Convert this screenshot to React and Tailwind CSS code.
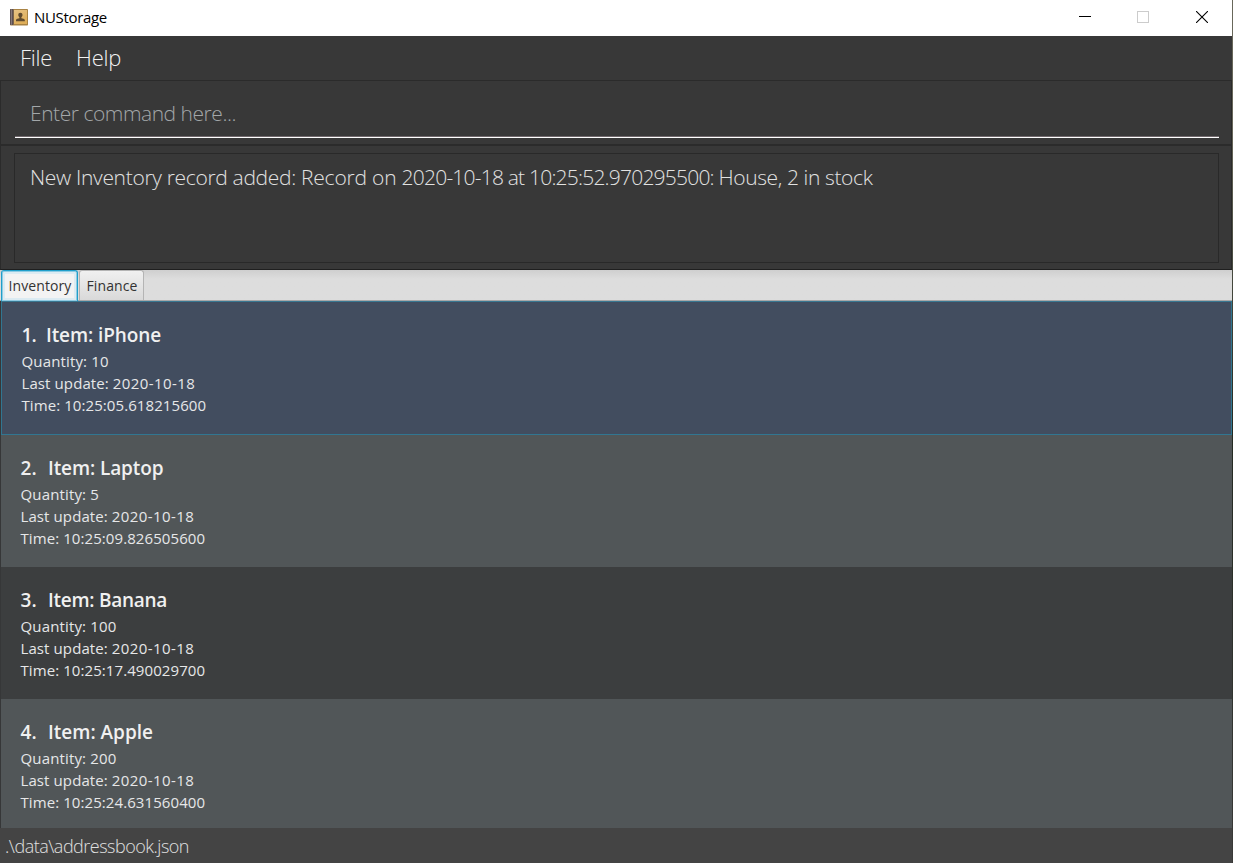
import React from "react";

const records = [
  { id: 1, name: "iPhone", quantity: 10, date: "2020-10-18", time: "10:25:05.618215600" },
  { id: 2, name: "Laptop", quantity: 5, date: "2020-10-18", time: "10:25:09.826505600" },
  { id: 3, name: "Banana", quantity: 100, date: "2020-10-18", time: "10:25:17.490029700" },
  { id: 4, name: "Apple", quantity: 200, date: "2020-10-18", time: "10:25:24.631560400" },
];

const rowStyles = {
  1: "h-[134px] border border-[#317691] border-t-[#397791] bg-[#424d5f] pl-[19.5px] pt-[19px]",
  2: "h-[132px] bg-[#515658] pl-[19.5px] pt-[19px]",
  3: "h-[132px] bg-[#3c3e3f] pl-[19.5px] pt-[19px]",
  4: "h-[129px] bg-[#515658] pl-[19.5px] pt-[19px]",
};

const nameSpacing = {
  1: "tracking-[-0.1px]",
  2: "tracking-[-0.1px]",
  3: "tracking-[-0.27px]",
  4: "tracking-normal",
};

function BookIcon() {
  return (
    <svg width="18" height="17" viewBox="0 0 18 17" className="block shrink-0">
      <defs>
        <linearGradient id="cover" x1="0" y1="0" x2="0.4" y2="1">
          <stop offset="0" stopColor="#e6c285" />
          <stop offset="1" stopColor="#dfae58" />
        </linearGradient>
      </defs>
      <rect x="0" y="0" width="18" height="16.5" rx="0.8" fill="#a98344" />
      <rect x="0" y="0" width="3.6" height="16" rx="0.8" fill="#5d5052" />
      <rect x="1" y="0.3" width="1" height="15.5" fill="#85787a" />
      <rect x="4" y="1" width="13" height="14" fill="url(#cover)" />
      <path
        d="M10.400 3.700c1.300 0 2.100.9 2.100 2.200 0 1-.5 1.800-1.100 2.300v1c1 .4 3.400.6 3.400 1.700v1.300H6v-1.300c0-1.100 2.400-1.300 3.400-1.700v-1c-.6-.5-1.100-1.300-1.100-2.300 0-1.300.8-2.200 2.100-2.200z"
        fill="#604b30"
      />
    </svg>
  );
}

function TitleBar() {
  return (
    <header className="flex h-9 items-center bg-white pl-[10px] text-black">
      <div className="pb-px">
        <BookIcon />
      </div>
      <h1 className="grow pb-0.5 pl-[6px] text-[15px] leading-[34px] tracking-[-0.32px]">NUStorage</h1>
      <div className="flex items-center pb-[3px] pr-6">
        <svg width="12" height="12" shapeRendering="crispEdges">
          <path d="M0 5h12v1H0z" fill="#000" />
        </svg>
        <svg width="12" height="12" shapeRendering="crispEdges" className="ml-[46px]">
          <path d="M.5.5h11v11H.5z" fill="none" stroke="#ccc" />
        </svg>
        <svg width="12" height="12" className="ml-[47px]">
          <path d="M0 0l12 12M12 0L0 12" stroke="#000" strokeWidth="1.1" />
        </svg>
      </div>
    </header>
  );
}

function RecordRow({ record }) {
  return (
    <li className={rowStyles[record.id]}>
      <div className="mb-px flex h-7 text-[19px] font-semibold leading-7 text-[#f0f0f0]">
        <span className={record.id === 1 ? "w-[24.500px] tracking-[-1px]" : "w-[27.5px]"}>{record.id}.</span>
        <span className={nameSpacing[record.id]}>Item: {record.name}</span>
      </div>
      <div className="text-[15px] leading-[22px] text-[#e6e7e8]">
        <p className="tracking-[0.15px]">Quantity: {record.quantity}</p>
        <p className="tracking-[0.1px]">
          Last update: <span className="tracking-[0.4px]">{record.date}</span>
        </p>
        <p className="tracking-[0.08px]">Time: {record.time}</p>
      </div>
    </li>
  );
}

export default function App() {
  return (
    <div className="flex h-[863px] w-[1233px] overflow-hidden bg-[#383838] font-['Open_Sans',sans-serif]">
      <div className="flex w-[1232px] shrink-0 flex-col">
        <TitleBar />
        <nav className="flex h-11 gap-[24px] pl-[20px] text-[22px] font-light leading-[42px] text-[#f2f2f2]">
          <span className="tracking-[-0.25px]">File</span>
          <span className="tracking-[-0.25px]">Help</span>
        </nav>

        <section className="h-[65px] border border-[#2b2b2b] pl-[14px] pr-3 pt-[17px]">
          <div className="h-[40px] border-b border-white pl-[15px] text-[21px] font-light leading-[30px] tracking-[-0.46px] text-[#a3a7a9] shadow-[inset_0_-1px_0_#71696d]">
            Enter command here...
          </div>
        </section>

        <section className="h-[125px] border border-[#2b2b2b] border-b-[#1f1f1f] pb-[6px] pl-[13px] pr-3 pt-[7px]">
          <div className="h-[110px] border border-[#292929] pl-[15px] pt-[8px] text-[21px] font-light leading-[31px] text-[#e2e2e2]">
            <span className="tracking-[-0.32px]">New Inventory record added: </span>
            <span className="tracking-[-0.2px]">Record on </span>
            <span className="tracking-[-0.79px]">2020-10-18 at 10:25:52.970295500: </span>
            <span className="tracking-[-0.38px]">House, 2 in stock</span>
          </div>
        </section>

        <div className="flex h-[31px] gap-px border-b border-[#a9a9a9] bg-linear-to-b from-[#cfcfcf] to-[#dddddd] to-30% pl-px text-[14px] leading-[29px] text-[#323232]">
          <div className="h-[31px] w-[77px] rounded-t-[3px] border border-b-0 border-[#1f9fcb] bg-[#f3f3f3] pl-[6.5px] leading-[30px] tracking-[0.1px] shadow-[inset_0_0_0_1px_#8fcbe2,inset_0_0_0_3px_#dcebf2]">
            Inventory
          </div>
          <div className="h-[30px] w-[65px] rounded-t-[3px] border border-b-0 border-[#b4b4b4] bg-linear-to-b from-[#f0f0f0] to-[#d9d9d9] pl-[6.5px] tracking-[0.1px]">
            Finance
          </div>
        </div>

        <ul className="h-[527px] overflow-hidden border-l border-[#363738]">
          {records.map((record) => (
            <RecordRow key={record.id} record={record} />
          ))}
        </ul>

        <footer className="h-[35px] bg-[#444444] pl-[5px] text-[18px] font-light leading-[37px] tracking-[-0.5px] text-[#e0e0e0]">
          .\data\addressbook.json
        </footer>
      </div>
      <div className="w-px bg-linear-to-b from-[#68675a] from-15% via-[#252b22] via-50% to-[#3a3a38]" />
    </div>
  );
}
